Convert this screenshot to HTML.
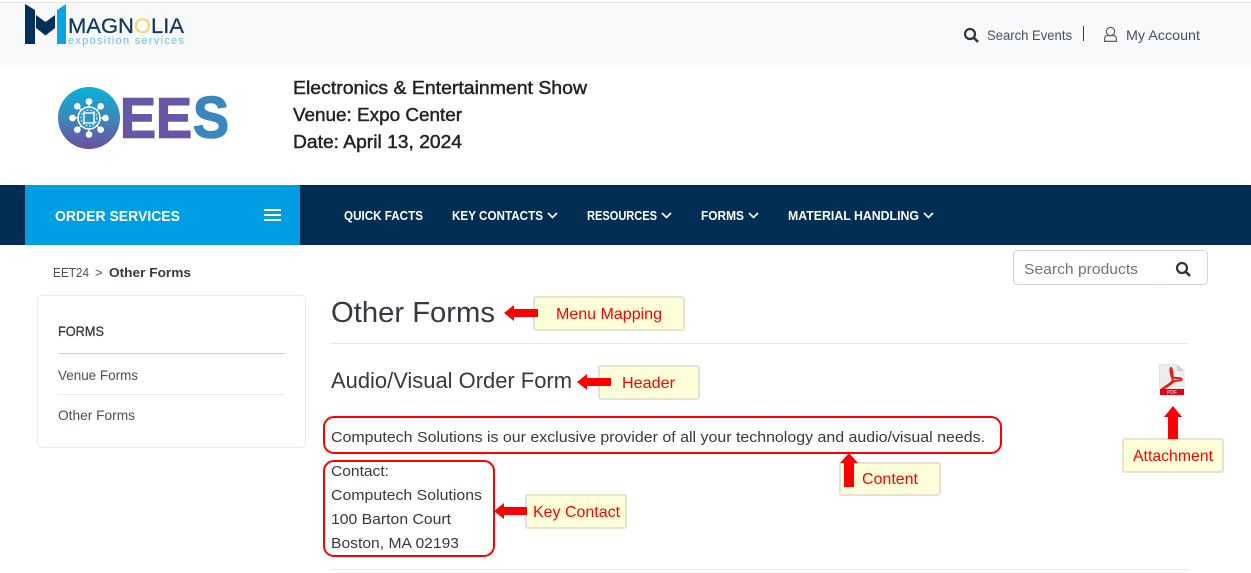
<!DOCTYPE html>
<html lang="en"><head><meta charset="utf-8"><title>Other Forms</title>
<style>
html,body{margin:0;padding:0;background:#fff;width:1251px;height:573px;overflow:hidden}
svg{display:block}
text{font-family:"Liberation Sans",sans-serif;fill:#343a40;font-size:15px}
.n{fill:#fff;font-weight:700;font-size:13px}
.c{fill:#f00;font-size:16px}
.m{fill:#212529;stroke:#212529;stroke-width:.45}
.a{fill:#f00}
.b{fill:#ffffd9;stroke:#e4e4d2;stroke-width:2}
</style></head><body>
<svg width="1251" height="573" viewBox="0 0 1251 573" xmlns="http://www.w3.org/2000/svg">
<defs><linearGradient id="g" x1="0" y1="0" x2="0" y2="1"><stop offset="0" stop-color="#0ab2d8"/><stop offset=".5" stop-color="#3a88bb"/><stop offset="1" stop-color="#6f4d9f"/></linearGradient></defs>
<rect x="0" y="2" width="1251" height="1" fill="#e2e3e3"/>
<rect x="0" y="3" width="1251" height="64" fill="#f8f9fa"/>
<!-- Magnolia logo -->
<path d="M25 4 L35 10 V44 H25Z" fill="#03305a"/>
<path d="M36 15 L45.500 22 L55 15 V28 L45.500 35.500 L36 28Z" fill="#03305a"/>
<path d="M57 10 L66 4 V44 H57Z" fill="#0ba2e3"/>
<text x="68" y="33" style="font-size:21px;fill:#10375f;stroke:#10375f;stroke-width:.25" textLength="116" lengthAdjust="spacingAndGlyphs">MAGN<tspan style="fill:#f0dc60;stroke:#f0dc60">O</tspan>LIA</text>
<text x="68" y="44" style="font-size:11px;fill:#6fbde2" textLength="116">exposition services</text>
<!-- top right -->
<circle cx="970" cy="34" r="5" fill="none" stroke="#2f3539" stroke-width="2.200"/>
<path d="M973.500 37.500 L978 42" stroke="#2f3539" stroke-width="2.600"/>
<text x="987" y="40" style="font-size:14px;fill:#495057" textLength="85" lengthAdjust="spacingAndGlyphs">Search Events</text>
<rect x="1083" y="26" width="1" height="15" fill="#343a40"/>
<circle cx="1110.500" cy="31.500" r="4.200" fill="none" stroke="#5a5f63" stroke-width="1.200"/>
<path d="M1104.600 41.400 V39 Q1104.600 35.500 1108 35.500 H1113 Q1116.400 35.500 1116.400 39 V41.400Z" fill="none" stroke="#5a5f63" stroke-width="1.200"/>
<text x="1126" y="40" style="font-size:14px;fill:#495057" textLength="74" lengthAdjust="spacingAndGlyphs">My Account</text>
<!-- EES logo -->
<circle cx="89" cy="118" r="31" fill="url(#g)"/>
<g fill="#fff" stroke="#fff">
<g stroke-width="1.200"><path d="M89 101.500V134.500M72.500 118H105.500M77.300 106.300L100.700 129.700M100.700 106.300L77.300 129.700"/></g>
<g stroke="none"><circle cx="89" cy="101.500" r="3.300"/><circle cx="89" cy="134.500" r="3.300"/><circle cx="72.500" cy="118" r="3.300"/><circle cx="105.500" cy="118" r="3.300"/><circle cx="77.300" cy="106.300" r="3.300"/><circle cx="100.700" cy="106.300" r="3.300"/><circle cx="77.300" cy="129.700" r="3.300"/><circle cx="100.700" cy="129.700" r="3.300"/></g>
</g>
<circle cx="89" cy="118" r="11" fill="#2d95c0" stroke="#fff" stroke-width="1.500"/>
<circle cx="89" cy="118" r="8" fill="none" stroke="#fff" stroke-width="1" stroke-dasharray="2 1.500"/>
<rect x="84" y="113" width="10" height="10" fill="#2d95c0" stroke="#fff" stroke-width="1.400"/>
<text x="120" y="137.500" style="font-size:57px;font-weight:700;fill:#6757a5;stroke:#6757a5;stroke-width:1.500" textLength="36" lengthAdjust="spacingAndGlyphs">E</text>
<text x="156" y="137.500" style="font-size:57px;font-weight:700;fill:#6757a5;stroke:#6757a5;stroke-width:1.500" textLength="36" lengthAdjust="spacingAndGlyphs">E</text>
<text x="193" y="137.500" style="font-size:58px;font-weight:700;fill:#3a86bd;stroke:#3a86bd;stroke-width:1.500" textLength="36" lengthAdjust="spacingAndGlyphs">S</text>
<!-- event -->
<text class="m" x="293" y="94" style="font-size:18px" textLength="294" lengthAdjust="spacingAndGlyphs">Electronics &amp; Entertainment Show</text>
<text class="m" x="293" y="121" style="font-size:18px" textLength="169" lengthAdjust="spacingAndGlyphs">Venue: Expo Center</text>
<text class="m" x="293" y="148" style="font-size:18px" textLength="169" lengthAdjust="spacingAndGlyphs">Date: April 13, 2024</text>
<!-- nav -->
<rect x="0" y="185" width="1251" height="60" fill="#032e54"/>
<rect x="25" y="185" width="275" height="60" fill="#009fe3"/>
<text x="55" y="221" style="font-size:15px;font-weight:700;fill:#fff" textLength="125" lengthAdjust="spacingAndGlyphs">ORDER SERVICES</text>
<path d="M264 210H281M264 215H281M264 220H281" stroke="#fff" stroke-width="2"/>
<text class="n" x="344" y="220" textLength="79" lengthAdjust="spacingAndGlyphs">QUICK FACTS</text>
<text class="n" x="452" y="220" textLength="91" lengthAdjust="spacingAndGlyphs">KEY CONTACTS</text>
<text class="n" x="587" y="220" textLength="70" lengthAdjust="spacingAndGlyphs">RESOURCES</text>
<text class="n" x="701" y="220" textLength="43" lengthAdjust="spacingAndGlyphs">FORMS</text>
<text class="n" x="788" y="220" textLength="131" lengthAdjust="spacingAndGlyphs">MATERIAL HANDLING</text>
<g fill="none" stroke="#fff" stroke-width="1.600"><path d="M548 213L552.500 217.500L557 213"/><path d="M662 213L666.500 217.500L671 213"/><path d="M749 213L753.500 217.500L758 213"/><path d="M924 213L928.500 217.500L933 213"/></g>
<!-- breadcrumb -->
<text x="53" y="277" style="font-size:13px;fill:#495057" textLength="36" lengthAdjust="spacingAndGlyphs">EET24</text>
<text x="95" y="277" style="font-size:13px;fill:#495057">&gt;</text>
<text x="109" y="277" style="font-size:13px;font-weight:700" textLength="82" lengthAdjust="spacingAndGlyphs">Other Forms</text>
<!-- product search -->
<rect x="1013.500" y="250.500" width="194" height="34" rx="4" fill="#fff" stroke="#ced4da"/>
<text x="1024" y="274" style="font-size:15px;fill:#6c757d" textLength="114" lengthAdjust="spacingAndGlyphs">Search products</text>
<circle cx="1182" cy="268" r="5" fill="none" stroke="#2f3539" stroke-width="2.200"/>
<path d="M1185.500 271.500L1190 276" stroke="#2f3539" stroke-width="2.600"/>
<!-- sidebar -->
<rect x="37.500" y="295.500" width="268" height="152" rx="4" fill="#fff" stroke="#e9ecef"/>
<text x="58" y="336" style="font-size:14px;stroke:#343a40;stroke-width:.3" textLength="46" lengthAdjust="spacingAndGlyphs">FORMS</text>
<rect x="58" y="353" width="227" height="1" fill="#cfcfcf"/>
<text x="58" y="380" style="font-size:14px;fill:#495057" textLength="80" lengthAdjust="spacingAndGlyphs">Venue Forms</text>
<rect x="58" y="394" width="227" height="1" fill="#e9ecef"/>
<text x="58" y="420" style="font-size:14px;fill:#495057" textLength="77" lengthAdjust="spacingAndGlyphs">Other Forms</text>
<!-- main -->
<text x="331" y="322" style="font-size:29px" textLength="164" lengthAdjust="spacingAndGlyphs">Other Forms</text>
<rect x="330" y="343" width="858" height="1" fill="#e6e8ea"/>
<text x="331" y="388" style="font-size:22px" textLength="241" lengthAdjust="spacingAndGlyphs">Audio/Visual Order Form</text>
<text x="331" y="442" textLength="654" lengthAdjust="spacingAndGlyphs">Computech Solutions is our exclusive provider of all your technology and audio/visual needs.</text>
<text x="331" y="476" textLength="58" lengthAdjust="spacingAndGlyphs">Contact:</text>
<text x="331" y="500" textLength="151" lengthAdjust="spacingAndGlyphs">Computech Solutions</text>
<text x="331" y="524" textLength="120" lengthAdjust="spacingAndGlyphs">100 Barton Court</text>
<text x="331" y="548" textLength="128" lengthAdjust="spacingAndGlyphs">Boston, MA 02193</text>
<rect x="330" y="569" width="858" height="1" fill="#e6e8ea"/>
<!-- pdf icon -->
<path d="M1159.500 364.500H1177L1184 371V389H1159.500Z" fill="#efeced" stroke="#e4e2e6"/>
<path d="M1177 364.500V371H1184Z" fill="#d0d0da"/>
<rect x="1160" y="389" width="24" height="6" fill="#e0001b"/>
<text x="1167" y="394" style="font-size:5px;fill:#ffb0b0;font-weight:700">PDF</text>
<path d="M1171 368C1169.500 369 1171 376 1173 380C1171 384 1166 386 1163.500 388C1167 388 1171 383 1175 381C1178 380 1182 381 1181.500 379C1180.500 377 1175 379 1173 377C1172 374 1172.500 369 1171 368Z" fill="none" stroke="#e2231a" stroke-width="2"/>
<!-- annotation boxes -->
<g fill="none" stroke="#f00" stroke-width="2"><rect x="324" y="417" width="677" height="36" rx="10"/><rect x="324" y="461" width="170" height="95" rx="10"/></g>
<rect class="b" x="534" y="297" width="150" height="33" rx="2"/>
<rect class="b" x="599" y="366" width="100" height="33" rx="2"/>
<rect class="b" x="526" y="495" width="100" height="33" rx="2"/>
<rect class="b" x="840" y="463" width="100" height="32" rx="2"/>
<rect class="b" x="1123" y="439" width="100" height="33" rx="2"/>
<text class="c" x="556" y="319" textLength="106" lengthAdjust="spacingAndGlyphs">Menu Mapping</text>
<text class="c" x="622" y="388" textLength="53" lengthAdjust="spacingAndGlyphs">Header</text>
<text class="c" x="533" y="517" textLength="87" lengthAdjust="spacingAndGlyphs">Key Contact</text>
<text class="c" x="862" y="484" textLength="56" lengthAdjust="spacingAndGlyphs">Content</text>
<text class="c" x="1133" y="461" textLength="80" lengthAdjust="spacingAndGlyphs">Attachment</text>
<!-- arrows -->
<path class="a" d="M504 313L514 305V309H538V317H514V321Z"/>
<path class="a" d="M577 382L587 374V378H611V386H587V390Z"/>
<path class="a" d="M494 511L504 503V507H527V515H504V519Z"/>
<path class="a" d="M849 453L858 463H854V487H844V463H840Z"/>
<path class="a" d="M1173 406L1182 417H1178V439H1168V417H1164Z"/>
</svg>
</body></html>
